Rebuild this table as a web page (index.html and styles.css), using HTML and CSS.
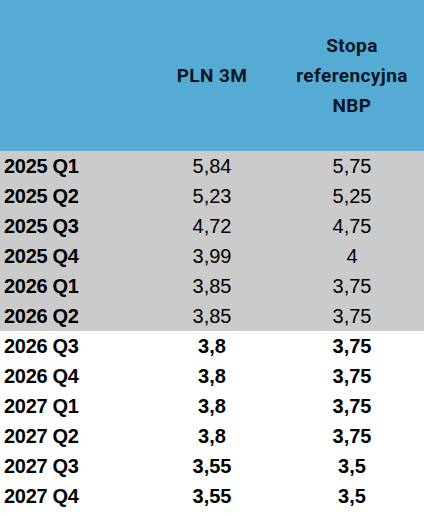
FILE: index.html
```html
<!DOCTYPE html>
<html lang="pl">
<head>
<meta charset="utf-8">
<link rel="stylesheet" href="styles.css">
</head>
<body>
<div class="sheet">
  <div class="head">
    <div class="hcell"></div>
    <div class="hcell">PLN 3M</div>
    <div class="hcell">Stopa<br>referencyjna<br>NBP</div>
  </div>
  <div class="rows gray">
    <div class="row"><span class="lbl">2025 Q1</span><span class="v">5,84</span><span class="v">5,75</span></div>
    <div class="row"><span class="lbl">2025 Q2</span><span class="v">5,23</span><span class="v">5,25</span></div>
    <div class="row"><span class="lbl">2025 Q3</span><span class="v">4,72</span><span class="v">4,75</span></div>
    <div class="row"><span class="lbl">2025 Q4</span><span class="v">3,99</span><span class="v">4</span></div>
    <div class="row"><span class="lbl">2026 Q1</span><span class="v">3,85</span><span class="v">3,75</span></div>
    <div class="row"><span class="lbl">2026 Q2</span><span class="v">3,85</span><span class="v">3,75</span></div>
  </div>
  <div class="rows white">
    <div class="row"><span class="lbl">2026 Q3</span><span class="v b">3,8</span><span class="v b">3,75</span></div>
    <div class="row"><span class="lbl">2026 Q4</span><span class="v b">3,8</span><span class="v b">3,75</span></div>
    <div class="row"><span class="lbl">2027 Q1</span><span class="v b">3,8</span><span class="v b">3,75</span></div>
    <div class="row"><span class="lbl">2027 Q2</span><span class="v b">3,8</span><span class="v b">3,75</span></div>
    <div class="row"><span class="lbl">2027 Q3</span><span class="v b">3,55</span><span class="v b">3,5</span></div>
    <div class="row"><span class="lbl">2027 Q4</span><span class="v b">3,55</span><span class="v b">3,5</span></div>
  </div>
</div>
</body>
</html>
```
FILE: styles.css
```css
html, body {
  margin: 0;
  padding: 0;
  background: #ffffff;
}
.sheet {
  width: 424px;
  font-family: "Liberation Sans", Arial, sans-serif;
  color: #000;
}
.head {
  display: grid;
  grid-template-columns: 142px 140px 140px;
  height: 151px;
  background: #55abd4;
  align-items: center;
}
.hcell {
  font-family: Roboto, "Liberation Sans", sans-serif;
  font-weight: 700;
  font-size: 19px;
  letter-spacing: 0.4px;
  line-height: 30px;
  text-align: center;
  color: #0b1620;
}
.rows.gray {
  background: #cbcbcb;
}
.row {
  display: grid;
  grid-template-columns: 142px 140px 140px;
  height: 30px;
  align-items: center;
  font-size: 20px;
}
.lbl {
  font-weight: 700;
  padding-left: 4px;
  letter-spacing: -0.3px;
}
.v {
  text-align: center;
}
.v.b {
  font-weight: 700;
}
```
